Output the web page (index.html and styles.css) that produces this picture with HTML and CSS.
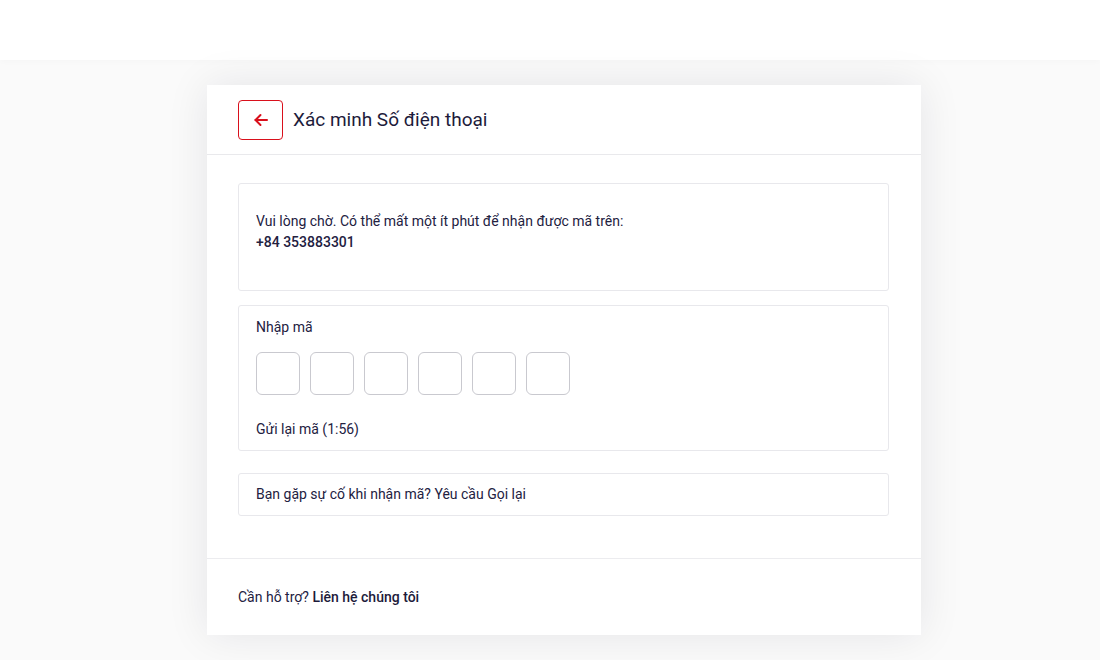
FILE: index.html
```html
<!DOCTYPE html>
<html lang="vi">
<head>
    <meta charset="UTF-8">
    <meta name="viewport" content="width=device-width, initial-scale=1.0">
    <title>Xác minh Số điện thoại</title>
    <link rel="stylesheet" href="styles.css">
</head>
<body>
    <header class="top-bar"></header>

    <main class="page">
        <section class="card">
            <div class="card-head">
                <button class="back-btn" type="button" aria-label="Quay lại">
                    <svg width="18" height="18" viewBox="0 0 18 18" fill="none" stroke="#d9101c" stroke-width="2" stroke-linecap="round" stroke-linejoin="round">
                        <path d="M15 9H3.5"/>
                        <path d="M8.5 4L3.5 9l5 5"/>
                    </svg>
                </button>
                <h1>Xác minh Số điện thoại</h1>
            </div>

            <div class="card-body">
                <div class="box box-info">
                    <p>Vui lòng chờ. Có thể mất một ít phút để nhận được mã trên:</p>
                    <p class="phone">+84 353883301</p>
                </div>

                <div class="box box-code">
                    <label class="code-label">Nhập mã</label>
                    <div class="code-inputs">
                        <input type="text" maxlength="1">
                        <input type="text" maxlength="1">
                        <input type="text" maxlength="1">
                        <input type="text" maxlength="1">
                        <input type="text" maxlength="1">
                        <input type="text" maxlength="1">
                    </div>
                    <p class="resend">Gửi lại mã (1:56)</p>
                </div>

                <div class="box box-call">
                    <p>Bạn gặp sự cố khi nhận mã? Yêu cầu Gọi lại</p>
                </div>
            </div>

            <div class="card-foot">
                Cần hỗ trợ? <a href="#">Liên hệ chúng tôi</a>
            </div>
        </section>
    </main>
</body>
</html>
```

FILE: styles.css
```css
body {
    margin: 0;
    font-family: Roboto, "Noto Sans", sans-serif;
    color: #23213f;
    background: #fafafa;
    height: 660px;
    overflow: hidden;
}
p {
    margin: 0;
}
.top-bar {
    height: 60px;
    background: #fff;
    box-shadow: 0 2px 6px rgba(0, 0, 0, 0.02);
}
.page {
    padding: 25px 0 0 207px;
}
.card {
    width: 714px;
    background: #fff;
    box-shadow: 0 0 40px rgba(20, 20, 40, 0.09);
}
.card-head {
    display: flex;
    align-items: center;
    gap: 10px;
    height: 69px;
    padding: 0 30px 0 31px;
    border-bottom: 1px solid #e9e9ec;
}
.card-head h1 {
    margin: 0;
    font-size: 19px;
    font-weight: 400;
    color: #1d1b3b;
}
.back-btn {
    width: 45px;
    height: 40px;
    display: flex;
    align-items: center;
    justify-content: center;
    background: #fff;
    border: 1px solid #d9101c;
    border-radius: 4px;
    padding: 0;
    cursor: pointer;
}
.card-body {
    padding: 28px 32px 42px 31px;
    display: flex;
    flex-direction: column;
}
.box {
    border: 1px solid #e8e8ec;
    border-radius: 3px;
    font-size: 14px;
    line-height: 21px;
    padding: 0 17px;
}
.box-info {
    padding-top: 27px;
    padding-bottom: 37px;
}
.phone {
    font-weight: 500;
}
.box-code {
    margin-top: 14px;
    padding-top: 11px;
    padding-bottom: 10px;
}
.code-label {
    display: block;
}
.code-inputs {
    display: flex;
    gap: 10px;
    margin: 14px 0 24px;
}
.code-inputs input {
    width: 44px;
    height: 43px;
    box-sizing: border-box;
    border: 1px solid #c9c9cf;
    border-radius: 6px;
    background: #fff;
    font-family: inherit;
    font-size: 18px;
    text-align: center;
}
.box-call {
    margin-top: 22px;
    padding-top: 10px;
    padding-bottom: 10px;
}
.card-foot {
    border-top: 1px solid #ececef;
    padding: 28px 31px 27px;
    font-size: 14px;
    line-height: 21px;
}
.card-foot a {
    color: #1d1b3b;
    font-weight: 500;
    text-decoration: none;
}
```
